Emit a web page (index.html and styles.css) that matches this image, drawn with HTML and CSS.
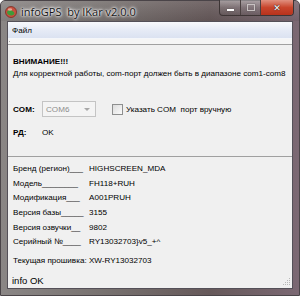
FILE: index.html
```html
<!DOCTYPE html>
<html lang="ru">
<head>
  <meta charset="UTF-8" />
  <title>infoGPS by IKar v2.0.0</title>
  <link rel="stylesheet" href="styles.css">
</head>
<body>
<div class="win">
  <div class="titlebar">
    <svg class="app-icon" width="12" height="12" viewBox="0 0 12 12">
      <circle cx="6" cy="6" r="5.5" fill="#c8503f"/>
      <circle cx="6" cy="6" r="5.5" fill="none" stroke="#7a2c22" stroke-width="0.8"/>
      <path d="M2 6 C3 3.5 6 3.5 7.5 5 C9 6 10 7 9 8.5 C7 10 4 9.5 2.5 8 Z" fill="#3f9a3a"/>
      <ellipse cx="5" cy="3.5" rx="2.2" ry="1.2" fill="#f0c8b8" opacity="0.7"/>
    </svg>
    <span class="title">infoGPS &nbsp;by IKar v2.0.0</span>
    <div class="caption">
      <span class="cbtn min"><i></i></span>
      <span class="cbtn max"><i></i></span>
      <span class="cbtn close">&#x2715;</span>
    </div>
  </div>
  <div class="client">
    <div class="menubar"><span class="menu-item">Файл</span></div>
    <div class="strip"><i class="grip-dot"></i></div>
    <div class="panel top">
      <div class="warn">ВНИМАНИЕ!!!</div>
      <div class="note">Для корректной работы, com-порт должен быть в диапазоне com1-com8</div>
      <div class="com-row">
        <span class="lbl">COM:</span>
        <div class="combo"><span>COM6</span><i class="arrow"></i></div>
        <label class="check"><span class="box"></span>Указать COM &nbsp;порт вручную</label>
      </div>
      <div class="rd-row">
        <span class="lbl">РД:</span>
        <span>OK</span>
      </div>
    </div>
    <div class="panel info">
      <div class="grid">
        <span>Бренд (регион)___</span><span>HIGHSCREEN_MDA</span>
        <span>Модель________</span><span>FH118+RUH</span>
        <span>Модификация___</span><span>A001PRUH</span>
        <span>Версия базы_____</span><span>3155</span>
        <span>Версия озвучки__</span><span>9802</span>
        <span>Серийный №____</span><span>RY13032703}v5_+^</span>
      </div>
      <div class="firmware">Текущая прошивка: XW-RY13032703</div>
    </div>
    <div class="statusbar">
      <span>info OK</span>
      <svg class="sizegrip" width="8" height="8" viewBox="0 0 8 8">
        <rect x="6" y="0" width="1" height="1" fill="#b8b8b8"/>
        <rect x="4" y="2" width="1" height="1" fill="#b8b8b8"/>
        <rect x="6" y="2" width="1" height="1" fill="#b8b8b8"/>
        <rect x="2" y="4" width="1" height="1" fill="#b8b8b8"/>
        <rect x="4" y="4" width="1" height="1" fill="#b8b8b8"/>
        <rect x="6" y="4" width="1" height="1" fill="#b8b8b8"/>
        <rect x="0" y="6" width="1" height="1" fill="#b8b8b8"/>
        <rect x="2" y="6" width="1" height="1" fill="#b8b8b8"/>
        <rect x="4" y="6" width="1" height="1" fill="#b8b8b8"/>
        <rect x="6" y="6" width="1" height="1" fill="#b8b8b8"/>
      </svg>
    </div>
  </div>
</div>
</body>
</html>
```

FILE: styles.css
```css
html, body {
  margin: 0;
  padding: 0;
  background: #fff;
}
.win {
  width: 300px;
  height: 296px;
  box-sizing: border-box;
  display: flex;
  flex-direction: column;
  border: 1px solid #4a4448;
  border-radius: 5px 5px 0 0;
  background: linear-gradient(to right, #8a8685 0%, #77716f 35%, #66595a 70%, #7b6873 100%);
  font-family: "Liberation Sans", Arial, sans-serif;
  font-size: 8.1px;
  color: #000;
}
.titlebar {
  height: 20px;
  display: flex;
  align-items: center;
  position: relative;
  background: linear-gradient(to bottom, rgba(255,255,255,0.1), rgba(0,0,0,0.06));
}
.app-icon {
  margin-left: 4px;
  margin-top: 1px;
}
.title {
  margin-left: 4px;
  font-family: "Open Sans", "Noto Sans", sans-serif;
  font-size: 11px;
  color: #161616;
  text-shadow: 0 0 4px #fff, 0 0 3px #fff, 0 0 2px #fff;
}
.caption {
  position: absolute;
  top: -1px;
  right: 5px;
  display: flex;
  height: 15px;
  border: 1px solid #3d3535;
  border-top: none;
  border-radius: 0 0 4px 4px;
  overflow: hidden;
}
.cbtn {
  display: flex;
  align-items: center;
  justify-content: center;
  height: 100%;
  background: linear-gradient(to bottom, rgba(255,255,255,0.35), rgba(255,255,255,0.08) 50%, rgba(0,0,0,0.05));
}
.cbtn.min {
  width: 20px;
  border-right: 1px solid #4a4040;
}
.cbtn.min i {
  width: 7px;
  height: 2px;
  margin-top: 5px;
  background: #fff;
  box-shadow: 0 0 1px #333;
}
.cbtn.max {
  width: 19px;
  border-right: 1px solid #4a4040;
}
.cbtn.max i {
  width: 6px;
  height: 5px;
  border: 1px solid #c8c2c2;
  box-shadow: 0 0 1px #555;
}
.cbtn.close {
  width: 32px;
  background: linear-gradient(to bottom, #e0907f, #c8452c 50%, #b8321c);
  color: #fff;
  font-size: 9px;
  font-weight: bold;
  font-family: "DejaVu Sans", sans-serif;
  text-shadow: 0 0 1px #222, 0 0 1px #222;
}
.client {
  flex: 1;
  margin: 0 6px 6px 6px;
  border: 1px solid #545058;
  background: #f0f0f0;
  display: flex;
  flex-direction: column;
}
.menubar {
  height: 16px;
  display: flex;
  align-items: center;
  background: linear-gradient(to bottom, #f8f9fc, #e6ebf6 50%, #dbe2f1);
  border-bottom: 1px solid #f4f6fa;
}
.menu-item {
  margin-left: 4px;
}
.strip {
  height: 5px;
  border-bottom: 1px solid #a0a0a0;
  background: #f5f5f5;
  position: relative;
}
.grip-dot {
  position: absolute;
  left: 1px;
  top: 2px;
  width: 1px;
  height: 1px;
  background: #aaa;
}
.panel {
  padding-left: 5px;
}
.panel.top {
  height: 112px;
  border-bottom: 1px solid #a0a0a0;
  padding-top: 11px;
  box-sizing: border-box;
}
.warn, .lbl {
  font-weight: bold;
}
.warn, .note {
  height: 12px;
  line-height: 12px;
  white-space: nowrap;
}
.com-row {
  margin-top: 21px;
  display: flex;
  align-items: center;
  height: 16px;
}
.com-row .lbl, .rd-row .lbl {
  width: 29px;
}
.combo {
  width: 54px;
  height: 16px;
  border: 1px solid #c4c4c4;
  background: #f4f4f4;
  color: #8c8c8c;
  display: flex;
  align-items: center;
  justify-content: space-between;
  padding: 0 5px 0 3px;
  box-sizing: border-box;
}
.arrow {
  width: 0;
  height: 0;
  border-left: 3px solid transparent;
  border-right: 3px solid transparent;
  border-top: 3px solid #a8a8a8;
}
.check {
  margin-left: 16px;
  display: flex;
  align-items: center;
}
.box {
  width: 9px;
  height: 9px;
  border: 1px solid #8e8f8f;
  background: linear-gradient(135deg, #dcdcdc, #fbfbfb);
  margin-right: 3px;
}
.rd-row {
  margin-top: 8px;
  display: flex;
  height: 14px;
  align-items: center;
}
.panel.info {
  flex: 1;
  padding-top: 4px;
}
.grid {
  display: grid;
  grid-template-columns: 76px auto;
  grid-auto-rows: 14.7px;
  align-items: center;
  white-space: nowrap;
}
.firmware {
  margin-top: 7px;
}
.statusbar {
  height: 18px;
  display: flex;
  align-items: center;
  justify-content: space-between;
  padding-left: 4px;
  padding-top: 2px;
  box-sizing: border-box;
  font-size: 9.5px;
}
.sizegrip {
  align-self: flex-end;
  margin: 0 1px 2px 0;
}
```
